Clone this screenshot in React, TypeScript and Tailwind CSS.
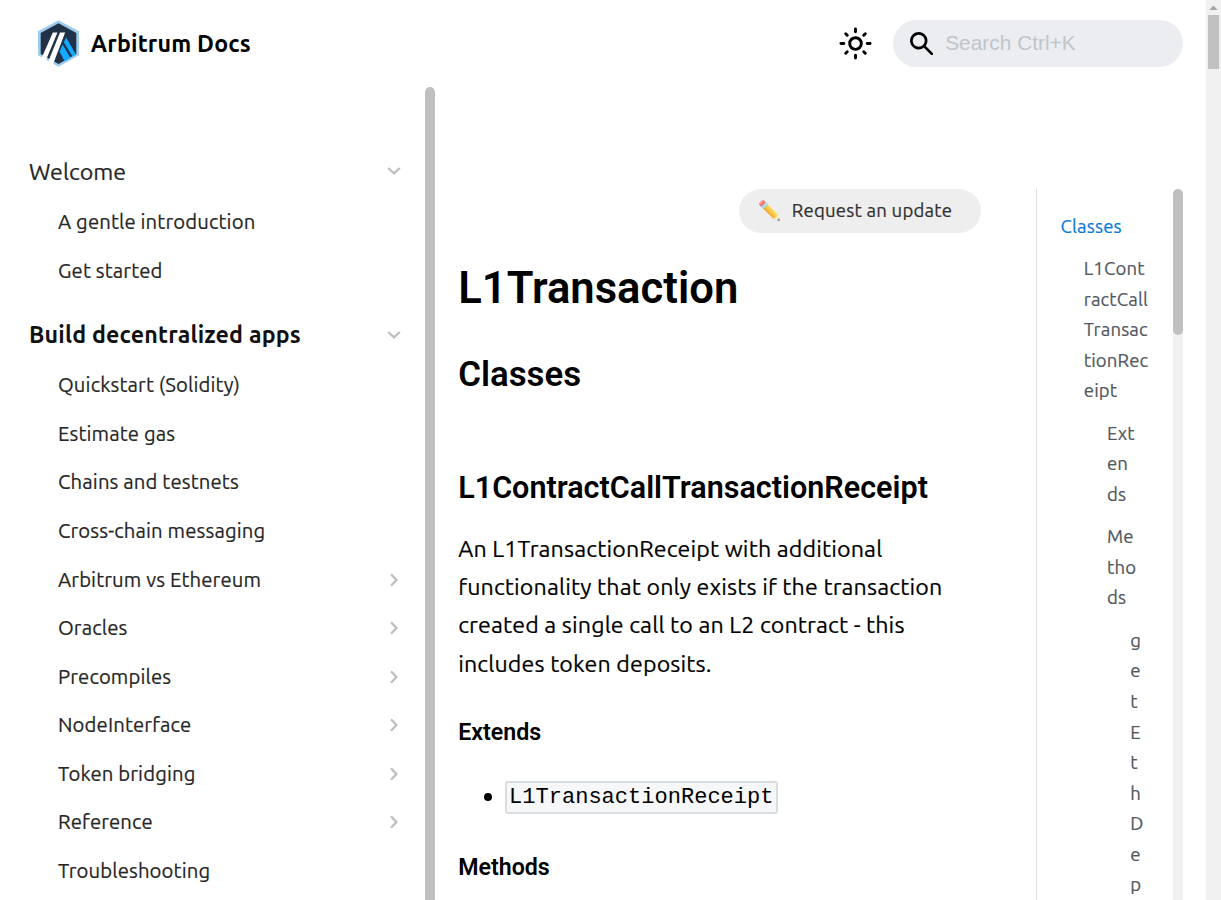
import type { ReactNode } from 'react';

function Chevron({ down = false }: { down?: boolean }) {
  return (
    <svg viewBox="0 0 14 14" className={down ? 'size-[14px] shrink-0 rotate-90' : 'size-[14px] shrink-0'} fill="none" stroke="#bfbfbf" strokeWidth="2.3">
      <path d="M4 1.2 9.4 7 4 12.8" />
    </svg>
  );
}

function Logo() {
  return (
    <svg viewBox="0 0 42 48" preserveAspectRatio="none" className="h-[48px] w-[43px]">
      <path d="M21 0.2 41 11.2v24L21 46.8 1 35.3v-24z" fill="#9dcced" strokeLinejoin="round" />
      <path d="M21 3.3 38.4 13v21L21 44 3.6 34V13z" fill="#213147" />
      <path d="M28.5 17.5 38 34.6 34.7 36.6 26.2 22.3z" fill="#12aaff" />
      <path d="M25 24.5 32.8 38 27 41.3 22 31.5z" fill="#12aaff" />
      <path d="M15.5 12.5H20L8.3 41.2 4.2 38.8z" fill="#fff" />
      <path d="M22.5 12.5h5L15.4 45 10.6 42.5z" fill="#fff" />
    </svg>
  );
}

function Sun() {
  return (
    <svg viewBox="0 0 24 24" className="size-[35px]" fill="none" stroke="#000" strokeWidth="2" strokeLinecap="round">
      <circle cx="12" cy="12" r="4" />
      <path d="M2 12h2M20 12h2M12 2v2M12 20v2M5.29 5.29l1.06 1.06M17.65 17.65l1.06 1.06M18.71 5.29l-1.06 1.06M6.35 17.65l-1.06 1.06" />
    </svg>
  );
}

function Header() {
  return (
    <header className="flex h-[87px] shrink-0 items-center pl-[37px] pr-[23px]">
      <Logo />
      <span className="ml-[10.8px] pb-[1px] text-[23.2px] font-semibold tracking-[0.17px] text-black">Arbitrum Docs</span>
      <div className="ml-auto flex items-center">
        <Sun />
        <div className="ml-5 flex h-[47px] w-[290px] items-center rounded-full bg-[#ebedf0] pl-[17px]">
          <svg viewBox="0 0 16 16" className="size-[23.2px]">
            <path d="M6.02945,10.20327a4.17382,4.17382,0,1,1,4.17382-4.17382A4.15609,4.15609,0,0,1,6.02945,10.20327Zm9.69195,4.2199L10.8989,9.59979A5.88021,5.88021,0,0,0,12.058,6.02856,6.00467,6.00467,0,1,0,9.59979,10.8989l4.82338,4.82338a.89729.89729,0,0,0,1.29912,0,.89749.89749,0,0,0-.00087-1.29909Z" />
          </svg>
          <span className="ml-3 pb-[2px] font-['Liberation_Sans',sans-serif] text-[20.88px] text-[#bfc5cb]">Search Ctrl+K</span>
        </div>
      </div>
    </header>
  );
}

function Category({ label, active = false, children }: { label: string; active?: boolean; children: ReactNode }) {
  return (
    <li className="mb-[15.5px]">
      <div className={active ? 'flex h-[48px] items-center justify-between pr-[11px] text-[23.2px] font-bold tracking-[0.19px] text-[#111]' : 'flex h-[48px] items-center justify-between pr-[11px] text-[23.2px] text-[#262626] [-webkit-text-stroke:0.2px]'}>
        {label}
        <Chevron down />
      </div>
      <ul className="pl-[29px] pt-[2.75px]">{children}</ul>
    </li>
  );
}

function Item({ label, arrow = false }: { label: string; arrow?: boolean }) {
  return (
    <li className="flex h-[48.56px] items-center justify-between pr-[11px] text-[20.3px] tracking-[0.13px] text-[#262626] [-webkit-text-stroke:0.2px]">
      {label}
      {arrow && <Chevron />}
    </li>
  );
}

function Sidebar() {
  return (
    <aside className="flex w-[435px] shrink-0">
      <ul className="w-[425px] pl-[29px] pr-[13.2px] pt-[60.2px]">
        <Category label="Welcome">
          <Item label="A gentle introduction" />
          <Item label="Get started" />
        </Category>
        <Category label="Build decentralized apps" active>
          <Item label="Quickstart (Solidity)" />
          <Item label="Estimate gas" />
          <Item label="Chains and testnets" />
          <Item label="Cross-chain messaging" />
          <Item label="Arbitrum vs Ethereum" arrow />
          <Item label="Oracles" arrow />
          <Item label="Precompiles" arrow />
          <Item label="NodeInterface" arrow />
          <Item label="Token bridging" arrow />
          <Item label="Reference" arrow />
          <Item label="Troubleshooting" />
        </Category>
      </ul>
      <div className="w-[10px] rounded-t-full bg-[#c0c0c0]" />
    </aside>
  );
}

function Article() {
  return (
    <article className="w-[522.8px] shrink-0 pt-[102px] text-black">
      <div className="flex justify-end">
        <button className="flex h-[44px] w-[242px] items-center rounded-full bg-[#eee] pl-[19px] text-[18.56px] tracking-[0.22px] text-[#303030] [-webkit-text-stroke:0.2px]">
          <span className="w-[33.8px] text-left opacity-75">✏️</span>
          Request an update
        </button>
      </div>
      <h1 className="mt-[29px] font-['Roboto',sans-serif] text-[43.6px] font-semibold leading-[54px]">L1Transaction</h1>
      <h2 className="mt-[36px] font-['Roboto',sans-serif] text-[34.8px] font-semibold leading-[44px]">Classes</h2>
      <h3 className="mt-[73px] font-['Roboto',sans-serif] text-[30.55px] font-semibold leading-[38px]">L1ContractCallTransactionReceipt</h3>
      <p className="mt-[21.8px] whitespace-nowrap text-[23.2px] leading-[38.28px] tracking-[0.14px] [-webkit-text-stroke:0.2px]">
        An L1TransactionReceipt with additional<br />
        functionality that only exists if the transaction<br />
        created a single call to an L2 contract - this<br />
        includes token deposits.
      </p>
      <h4 className="mt-[36.2px] font-['Roboto',sans-serif] text-[23.2px] font-semibold leading-[29px]">Extends</h4>
      <ul className="mt-[31px] flex h-[38px] items-center">
        <li className="flex items-center pl-[25.6px]">
          <span className="size-[8px] rounded-full bg-black" />
          <code className="ml-[13px] flex h-[33px] items-center rounded-[3px] border-2 border-[#dadddf] bg-[#f6f7f8] px-[2.3px] font-['Liberation_Mono',monospace] text-[22.04px]">L1TransactionReceipt</code>
        </li>
      </ul>
      <h4 className="mt-[37px] font-['Roboto',sans-serif] text-[23.2px] font-semibold leading-[29px]">Methods</h4>
    </article>
  );
}

function TocEntry({ lines, className }: { lines: string[]; className: string }) {
  return (
    <li className={className}>
      {lines.map((line, i) => (
        <div key={i}>{line}</div>
      ))}
    </li>
  );
}

function Toc() {
  return (
    <nav className="ml-[55px] mt-[102px] flex w-[147px] shrink-0 overflow-hidden border-l border-[#dadde1]">
      <ul className="w-[136px] pl-[23.6px] pt-[23px] text-[18.56px] leading-[30.6px] tracking-[0.14px] text-[#525860] [-webkit-text-stroke:0.2px]">
        <TocEntry lines={['Classes']} className="text-[#0879d8]" />
        <TocEntry lines={['L1Cont', 'ractCall', 'Transac', 'tionRec', 'eipt']} className="mt-[11.4px] pl-[23.2px]" />
        <TocEntry lines={['Ext', 'en', 'ds']} className="mt-[11.7px] pl-[46.4px]" />
        <TocEntry lines={['Me', 'tho', 'ds']} className="mt-[11.6px] pl-[46.4px]" />
        <TocEntry lines={['g', 'e', 't', 'E', 't', 'h', 'D', 'e', 'p']} className="mt-[11.95px] pl-[69.6px]" />
      </ul>
      <div className="w-[10px] rounded-t-full bg-[#f1f1f1]">
        <div className="h-[146px] rounded-full bg-[#c0c0c0]" />
      </div>
    </nav>
  );
}

export default function App() {
  return (
    <div className="flex h-[900px] w-[1221px] overflow-hidden bg-white font-['Ubuntu','Noto_Sans',sans-serif]">
      <div className="flex w-[1206px] flex-col">
        <Header />
        <div className="flex h-[813px] overflow-hidden">
          <Sidebar />
          <main className="flex pl-[23.2px]">
            <Article />
            <Toc />
          </main>
        </div>
      </div>
      <div className="flex w-[15px] flex-col items-center bg-[#f1f1f1]">
        <svg viewBox="0 0 15 15" className="size-[15px] shrink-0">
          <path d="M3.5 10h8l-4-4.5z" fill="#a3a3a3" />
        </svg>
        <div className="h-[54px] w-[11px] bg-[#c1c1c1]" />
      </div>
    </div>
  );
}
